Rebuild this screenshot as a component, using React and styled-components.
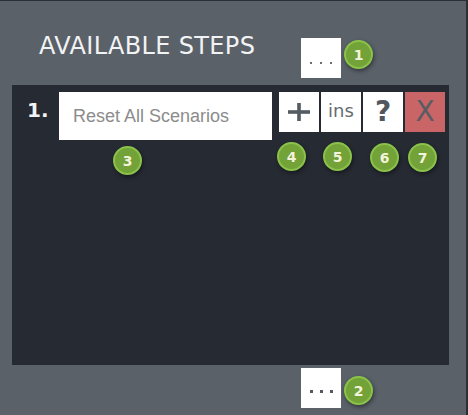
import React from "react";
import styled, { createGlobalStyle } from "styled-components";

const Global = createGlobalStyle`
  html, body { margin: 0; padding: 0; background: #5a6169; }
  * { box-sizing: border-box; }
`;

const Page = styled.div`
  width: 468px;
  height: 415px;
  background: #5a6169;
  border-top: 1px solid #2a2e35;
  border-right: 2px solid #2a2e35;
  display: flex;
  flex-direction: column;
  font-family: "DejaVu Sans", sans-serif;
  overflow: hidden;
`;

const Header = styled.div`
  height: 84px;
  padding-left: 39px;
  display: flex;
  align-items: flex-start;
`;

const Title = styled.h1`
  margin: 33px 0 0 0;
  width: 262px;
  font-family: "DejaVu Sans", sans-serif;
  font-weight: normal;
  font-size: 24px;
  line-height: 24px;
  letter-spacing: 0.35px;
  color: #f2f3f4;
  white-space: nowrap;
`;

const DotsWrap = styled.div`
  position: relative;
  margin-top: ${(p) => p.$top || 0}px;
`;

const DotsBox = styled.div`
  width: 40px;
  height: 40px;
  background: #ffffff;
  display: flex;
  justify-content: center;
  align-items: center;
  gap: ${(p) => (p.$big ? 7 : 8)}px;
  padding-top: ${(p) => p.$offset}px;
`;

const Dot = styled.span`
  width: ${(p) => p.$size}px;
  height: ${(p) => p.$size}px;
  background: ${(p) => p.$color};
`;

const Badge = styled.div`
  position: absolute;
  left: ${(p) => p.$left}px;
  top: ${(p) => p.$top}px;
  width: 29px;
  height: 29px;
  border-radius: 50%;
  background: #72a238;
  border: 2px solid #8ac24a;
  box-shadow: 1px 2px 4px rgba(0, 0, 0, 0.45);
  display: flex;
  align-items: center;
  justify-content: center;
  font-family: "DejaVu Sans", sans-serif;
  font-weight: bold;
  font-size: 14px;
  line-height: 1;
  color: #f5f2dc;
`;

const Panel = styled.div`
  position: relative;
  margin-left: 12px;
  width: 437px;
  height: 280px;
  background: #262a33;
`;

const StepRow = styled.div`
  display: flex;
  align-items: flex-start;
  padding: 7px 0 0 15px;
`;

const StepNumber = styled.div`
  width: 32px;
  margin-top: 8px;
  font-family: "DejaVu Sans", sans-serif;
  font-weight: bold;
  font-size: 20px;
  line-height: 20px;
  color: #f2f3f4;
`;

const StepInput = styled.input`
  width: 213px;
  height: 48px;
  border: none;
  outline: none;
  background: #ffffff;
  padding: 0 0 0 14px;
  font-family: "Liberation Sans", Arial, sans-serif;
  font-size: 18px;
  color: #444;
  &::placeholder {
    color: #8c8c8c;
  }
`;

const ButtonGroup = styled.div`
  display: flex;
  gap: 2px;
  margin-left: 7px;
`;

const ActionButton = styled.button`
  width: 40px;
  height: 40px;
  border: none;
  padding: 0;
  margin: 0;
  background: ${(p) => (p.$danger ? "#c96566" : "#ffffff")};
  color: ${(p) => (p.$danger ? "#595d63" : "#52575e")};
  display: flex;
  align-items: center;
  justify-content: center;
  font-family: "DejaVu Sans", sans-serif;
  font-size: ${(p) => p.$size || 18}px;
  font-weight: ${(p) => (p.$bold ? "bold" : "normal")};
  line-height: 1;
  cursor: pointer;
`;

const InsLabel = styled.span`
  color: #676b71;
  margin-top: -2px;
`;

const Footer = styled.div`
  padding-left: 301px;
`;

export default function App() {
  return (
    <>
      <Global />
      <Page>
        <Header>
          <Title>AVAILABLE STEPS</Title>
          <DotsWrap $top={37}>
            <DotsBox $offset={10}>
              <Dot $size={2} $color="#6a6e73" />
              <Dot $size={2} $color="#6a6e73" />
              <Dot $size={2} $color="#6a6e73" />
            </DotsBox>
            <Badge $left={43} $top={2}>1</Badge>
          </DotsWrap>
        </Header>
        <Panel>
          <StepRow>
            <StepNumber>1.</StepNumber>
            <StepInput placeholder="Reset All Scenarios" />
            <ButtonGroup>
              <ActionButton aria-label="add">
                <svg width="22" height="18" viewBox="0 0 22 18">
                  <rect x="0" y="7.2" width="22" height="3.6" fill="#555b62" />
                  <rect x="9.2" y="0" width="3.6" height="18" fill="#555b62" />
                </svg>
              </ActionButton>
              <ActionButton aria-label="insert">
                <InsLabel>ins</InsLabel>
              </ActionButton>
              <ActionButton aria-label="help" $size={28} $bold>
                ?
              </ActionButton>
              <ActionButton aria-label="remove" $danger $size={28}>
                X
              </ActionButton>
            </ButtonGroup>
          </StepRow>
          <Badge $left={101} $top={61}>3</Badge>
          <Badge $left={265} $top={57}>4</Badge>
          <Badge $left={311} $top={57}>5</Badge>
          <Badge $left={358} $top={58}>6</Badge>
          <Badge $left={396} $top={58}>7</Badge>
        </Panel>
        <Footer>
          <DotsWrap $top={3}>
            <DotsBox $offset={6} $big>
              <Dot $size={3} $color="#55595f" />
              <Dot $size={3} $color="#55595f" />
              <Dot $size={3} $color="#55595f" />
            </DotsBox>
            <Badge $left={43} $top={8}>2</Badge>
          </DotsWrap>
        </Footer>
      </Page>
    </>
  );
}
